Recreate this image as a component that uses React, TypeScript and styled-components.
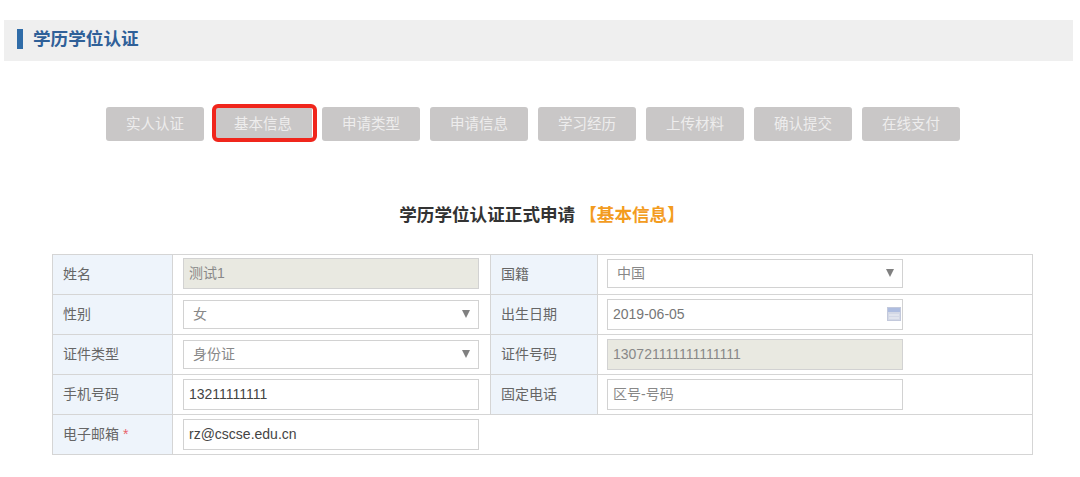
import React from 'react';
import styled, { createGlobalStyle } from 'styled-components';

const GlobalStyle = createGlobalStyle`
    html, body {
        margin: 0;
        padding: 0;
        background: #fff;
        font-family: 'Liberation Sans', 'Noto Sans CJK SC', sans-serif;
    }
`;

const Page = styled.div`
    width: 1080px;
    height: 477px;
    padding-top: 20px;
    box-sizing: border-box;
    overflow: hidden;
`;

const TitleBar = styled.div`
    margin: 0 7px 0 4px;
    height: 41px;
    background: #efefef;
    display: flex;
    align-items: center;
    padding: 0 0 4px 13px;
    box-sizing: border-box;
`;

const TitleMark = styled.i`
    width: 6px;
    height: 20px;
    background: #2f6ca8;
    margin-right: 10px;
`;

const TitleText = styled.h2`
    margin: 0 0 2px;
    font-size: 17.6px;
    font-weight: bold;
    color: #2f6098;
`;

const Steps = styled.div`
    display: flex;
    gap: 10px;
    margin: 46px 0 0 106px;
`;

const Step = styled.div<{ $active?: boolean }>`
    position: relative;
    width: 98px;
    height: 34px;
    border-radius: 3px;
    background: #c9c7c7;
    color: #eeeded;
    font-size: 14.5px;
    line-height: 34px;
    text-align: center;
    ${(p) =>
        p.$active &&
        `&::after {
            content: '';
            position: absolute;
            top: -3px;
            left: -2px;
            right: -5px;
            bottom: -1px;
            border: 4px solid #f0261c;
            border-radius: 6px;
        }`}
`;

const FormTitle = styled.h3`
    margin: 61px 0 0;
    padding-left: 4px;
    height: 26px;
    line-height: 26px;
    font-size: 17.6px;
    font-weight: bold;
    text-align: center;
    color: #333;
`;

const Accent = styled.span`
    color: #f39c1f;
    margin-left: 4px;
`;

const FormTable = styled.table`
    margin: 26px 0 0 52px;
    width: 981px;
    border-collapse: collapse;
    table-layout: fixed;
    font-size: 14px;
    color: #666;
`;

const Label = styled.th`
    padding: 0 0 3px 10px;
    border: 1px solid #d5d5d5;
    background: #eef4fb;
    text-align: left;
    font-weight: normal;
    box-sizing: border-box;
`;

const Field = styled.td<{ $second?: boolean }>`
    padding: 0 0 3px ${(p) => (p.$second ? '9px' : '10px')};
    border: 1px solid #d5d5d5;
    box-sizing: border-box;
`;

const Row = styled.tr`
    height: 40px;
    &:not(:first-child) ${Field} {
        padding-bottom: 1px;
    }
`;

const OpenField = styled(Field)`
    border-right: 0;
`;

const EmptyField = styled(Field)`
    border-left: 0;
`;

const Star = styled.span`
    color: #e8636a;
`;

const Control = styled.div<{ $readOnly?: boolean }>`
    position: relative;
    width: 296px;
    height: 31px;
    line-height: 29px;
    box-sizing: border-box;
    border: 1px solid #d2d2d2;
    padding-left: 5px;
    background: ${(p) => (p.$readOnly ? '#e9e9e1' : '#fff')};
    color: ${(p) => (p.$readOnly ? '#888' : '#444')};
    font-size: 14px;
`;

const SelectControl = styled(Control)`
    height: 29px;
    line-height: 27px;
    padding-left: 9px;
    color: #888;
`;

const Arrow = styled.span`
    position: absolute;
    right: 8px;
    top: 9px;
    width: 0;
    height: 0;
    border-left: 4px solid transparent;
    border-right: 4px solid transparent;
    border-top: 8px solid #808080;
`;

const Placeholder = styled.span`
    color: #888;
`;

const MutedValue = styled.span`
    color: #777;
`;

const CalendarIcon = styled.svg`
    position: absolute;
    right: 1px;
    top: 7px;
`;

const Select = ({ value }: { value: string }) => (
    <SelectControl>
        {value}
        <Arrow />
    </SelectControl>
);

const steps = ['实人认证', '基本信息', '申请类型', '申请信息', '学习经历', '上传材料', '确认提交', '在线支付'];

const App = () => {
    return (
        <>
            <GlobalStyle />
            <Page>
                <TitleBar>
                    <TitleMark />
                    <TitleText>学历学位认证</TitleText>
                </TitleBar>
                <Steps>
                    {steps.map((s) => (
                        <Step key={s} $active={s === '基本信息'}>
                            {s}
                        </Step>
                    ))}
                </Steps>
                <FormTitle>
                    学历学位认证正式申请<Accent>【基本信息】</Accent>
                </FormTitle>
                <FormTable>
                    <colgroup>
                        <col style={{ width: 120 }} />
                        <col style={{ width: 318 }} />
                        <col style={{ width: 107 }} />
                        <col />
                    </colgroup>
                    <tbody>
                        <Row>
                            <Label>姓名</Label>
                            <Field>
                                <Control $readOnly>测试1</Control>
                            </Field>
                            <Label>国籍</Label>
                            <Field $second>
                                <Select value="中国" />
                            </Field>
                        </Row>
                        <Row>
                            <Label>性别</Label>
                            <Field>
                                <Select value="女" />
                            </Field>
                            <Label>出生日期</Label>
                            <Field $second>
                                <Control>
                                    <MutedValue>2019-06-05</MutedValue>
                                    <CalendarIcon width="14" height="14" viewBox="0 0 14 14">
                                        <rect x="0.5" y="0.5" width="13" height="13" fill="#d3d8e6" stroke="#c3c9dc" />
                                        <rect x="1" y="1" width="12" height="4" fill="#aebde0" />
                                        <path d="M2 8h10M2 11h10" stroke="#eef0f5" />
                                    </CalendarIcon>
                                </Control>
                            </Field>
                        </Row>
                        <Row>
                            <Label>证件类型</Label>
                            <Field>
                                <Select value="身份证" />
                            </Field>
                            <Label>证件号码</Label>
                            <Field $second>
                                <Control $readOnly>130721111111111111</Control>
                            </Field>
                        </Row>
                        <Row>
                            <Label>手机号码</Label>
                            <Field>
                                <Control>13211111111</Control>
                            </Field>
                            <Label>固定电话</Label>
                            <Field $second>
                                <Control>
                                    <Placeholder>区号-号码</Placeholder>
                                </Control>
                            </Field>
                        </Row>
                        <Row>
                            <Label>
                                电子邮箱 <Star>*</Star>
                            </Label>
                            <OpenField>
                                <Control>rz@cscse.edu.cn</Control>
                            </OpenField>
                            <EmptyField colSpan={2} />
                        </Row>
                    </tbody>
                </FormTable>
            </Page>
        </>
    );
};

export default App;
